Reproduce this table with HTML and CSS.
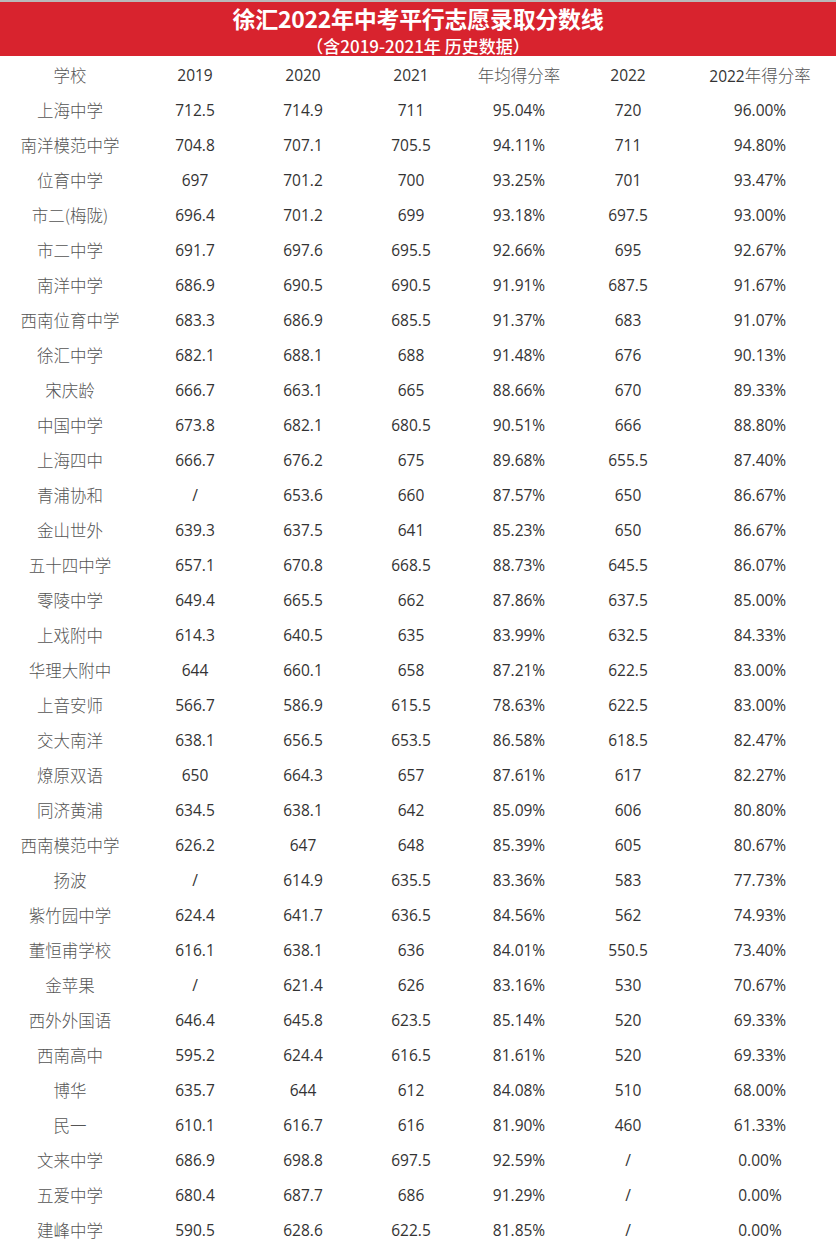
FILE: index.html
```html
<!DOCTYPE html>
<html lang="zh">
<head>
<meta charset="utf-8">
<link rel="stylesheet" href="styles.css">
</head>
<body>
<div class="banner">
  <div class="title">徐汇2022年中考平行志愿录取分数线</div>
  <div class="subtitle">（含2019-2021年 历史数据）</div>
</div>
<div class="table">
  <div class="row head"><span class="cn">学校</span><span>2019</span><span>2020</span><span>2021</span><span class="cn">年均得分率</span><span>2022</span><span>2022<span class="cn">年得分率</span></span></div>
  <div class="row"><span class="cn">上海中学</span><span>712.5</span><span>714.9</span><span>711</span><span>95.04%</span><span>720</span><span>96.00%</span></div>
  <div class="row"><span class="cn">南洋模范中学</span><span>704.8</span><span>707.1</span><span>705.5</span><span>94.11%</span><span>711</span><span>94.80%</span></div>
  <div class="row"><span class="cn">位育中学</span><span>697</span><span>701.2</span><span>700</span><span>93.25%</span><span>701</span><span>93.47%</span></div>
  <div class="row"><span class="cn">市二(梅陇)</span><span>696.4</span><span>701.2</span><span>699</span><span>93.18%</span><span>697.5</span><span>93.00%</span></div>
  <div class="row"><span class="cn">市二中学</span><span>691.7</span><span>697.6</span><span>695.5</span><span>92.66%</span><span>695</span><span>92.67%</span></div>
  <div class="row"><span class="cn">南洋中学</span><span>686.9</span><span>690.5</span><span>690.5</span><span>91.91%</span><span>687.5</span><span>91.67%</span></div>
  <div class="row"><span class="cn">西南位育中学</span><span>683.3</span><span>686.9</span><span>685.5</span><span>91.37%</span><span>683</span><span>91.07%</span></div>
  <div class="row"><span class="cn">徐汇中学</span><span>682.1</span><span>688.1</span><span>688</span><span>91.48%</span><span>676</span><span>90.13%</span></div>
  <div class="row"><span class="cn">宋庆龄</span><span>666.7</span><span>663.1</span><span>665</span><span>88.66%</span><span>670</span><span>89.33%</span></div>
  <div class="row"><span class="cn">中国中学</span><span>673.8</span><span>682.1</span><span>680.5</span><span>90.51%</span><span>666</span><span>88.80%</span></div>
  <div class="row"><span class="cn">上海四中</span><span>666.7</span><span>676.2</span><span>675</span><span>89.68%</span><span>655.5</span><span>87.40%</span></div>
  <div class="row"><span class="cn">青浦协和</span><span>/</span><span>653.6</span><span>660</span><span>87.57%</span><span>650</span><span>86.67%</span></div>
  <div class="row"><span class="cn">金山世外</span><span>639.3</span><span>637.5</span><span>641</span><span>85.23%</span><span>650</span><span>86.67%</span></div>
  <div class="row"><span class="cn">五十四中学</span><span>657.1</span><span>670.8</span><span>668.5</span><span>88.73%</span><span>645.5</span><span>86.07%</span></div>
  <div class="row"><span class="cn">零陵中学</span><span>649.4</span><span>665.5</span><span>662</span><span>87.86%</span><span>637.5</span><span>85.00%</span></div>
  <div class="row"><span class="cn">上戏附中</span><span>614.3</span><span>640.5</span><span>635</span><span>83.99%</span><span>632.5</span><span>84.33%</span></div>
  <div class="row"><span class="cn">华理大附中</span><span>644</span><span>660.1</span><span>658</span><span>87.21%</span><span>622.5</span><span>83.00%</span></div>
  <div class="row"><span class="cn">上音安师</span><span>566.7</span><span>586.9</span><span>615.5</span><span>78.63%</span><span>622.5</span><span>83.00%</span></div>
  <div class="row"><span class="cn">交大南洋</span><span>638.1</span><span>656.5</span><span>653.5</span><span>86.58%</span><span>618.5</span><span>82.47%</span></div>
  <div class="row"><span class="cn">燎原双语</span><span>650</span><span>664.3</span><span>657</span><span>87.61%</span><span>617</span><span>82.27%</span></div>
  <div class="row"><span class="cn">同济黄浦</span><span>634.5</span><span>638.1</span><span>642</span><span>85.09%</span><span>606</span><span>80.80%</span></div>
  <div class="row"><span class="cn">西南模范中学</span><span>626.2</span><span>647</span><span>648</span><span>85.39%</span><span>605</span><span>80.67%</span></div>
  <div class="row"><span class="cn">扬波</span><span>/</span><span>614.9</span><span>635.5</span><span>83.36%</span><span>583</span><span>77.73%</span></div>
  <div class="row"><span class="cn">紫竹园中学</span><span>624.4</span><span>641.7</span><span>636.5</span><span>84.56%</span><span>562</span><span>74.93%</span></div>
  <div class="row"><span class="cn">董恒甫学校</span><span>616.1</span><span>638.1</span><span>636</span><span>84.01%</span><span>550.5</span><span>73.40%</span></div>
  <div class="row"><span class="cn">金苹果</span><span>/</span><span>621.4</span><span>626</span><span>83.16%</span><span>530</span><span>70.67%</span></div>
  <div class="row"><span class="cn">西外外国语</span><span>646.4</span><span>645.8</span><span>623.5</span><span>85.14%</span><span>520</span><span>69.33%</span></div>
  <div class="row"><span class="cn">西南高中</span><span>595.2</span><span>624.4</span><span>616.5</span><span>81.61%</span><span>520</span><span>69.33%</span></div>
  <div class="row"><span class="cn">博华</span><span>635.7</span><span>644</span><span>612</span><span>84.08%</span><span>510</span><span>68.00%</span></div>
  <div class="row"><span class="cn">民一</span><span>610.1</span><span>616.7</span><span>616</span><span>81.90%</span><span>460</span><span>61.33%</span></div>
  <div class="row"><span class="cn">文来中学</span><span>686.9</span><span>698.8</span><span>697.5</span><span>92.59%</span><span>/</span><span>0.00%</span></div>
  <div class="row"><span class="cn">五爱中学</span><span>680.4</span><span>687.7</span><span>686</span><span>91.29%</span><span>/</span><span>0.00%</span></div>
  <div class="row"><span class="cn">建峰中学</span><span>590.5</span><span>628.6</span><span>622.5</span><span>81.85%</span><span>/</span><span>0.00%</span></div>
</div>
</body>
</html>
```

FILE: styles.css
```css
html, body {
  margin: 0;
  padding: 0;
  background: #ffffff;
}
body {
  width: 836px;
  overflow: hidden;
  font-family: "Open Sans", "Liberation Sans", "Noto Sans CJK SC", sans-serif;
}
.banner {
  height: 56px;
  background: #d8232e;
  border-top: 2px solid #b9b9b9;
  box-sizing: border-box;
  margin-bottom: 1px;
  color: #ffffff;
  display: flex;
  flex-direction: column;
  align-items: center;
}
.title {
  font-family: "Noto Sans CJK SC", sans-serif;
  font-weight: 600;
  font-size: 23px;
  line-height: 28px;
  margin-top: 2px;
  letter-spacing: -0.3px;
}
.subtitle {
  font-family: "Noto Sans CJK SC", sans-serif;
  font-weight: 500;
  font-size: 17px;
  line-height: 20px;
  margin-top: 4px;
  height: 20px;
}
.table {
  display: flex;
  flex-direction: column;
}
.row {
  display: grid;
  grid-template-columns: 140px 110px 106px 110px 106px 112px 152px;
  height: 35px;
  align-items: center;
  font-size: 15.5px;
  color: #333333;
}
.row > span {
  text-align: center;
  white-space: nowrap;
}
.cn {
  font-family: "Noto Sans CJK SC", sans-serif;
  font-weight: 300;
  font-size: 16.5px;
  color: #555555;
}
```
